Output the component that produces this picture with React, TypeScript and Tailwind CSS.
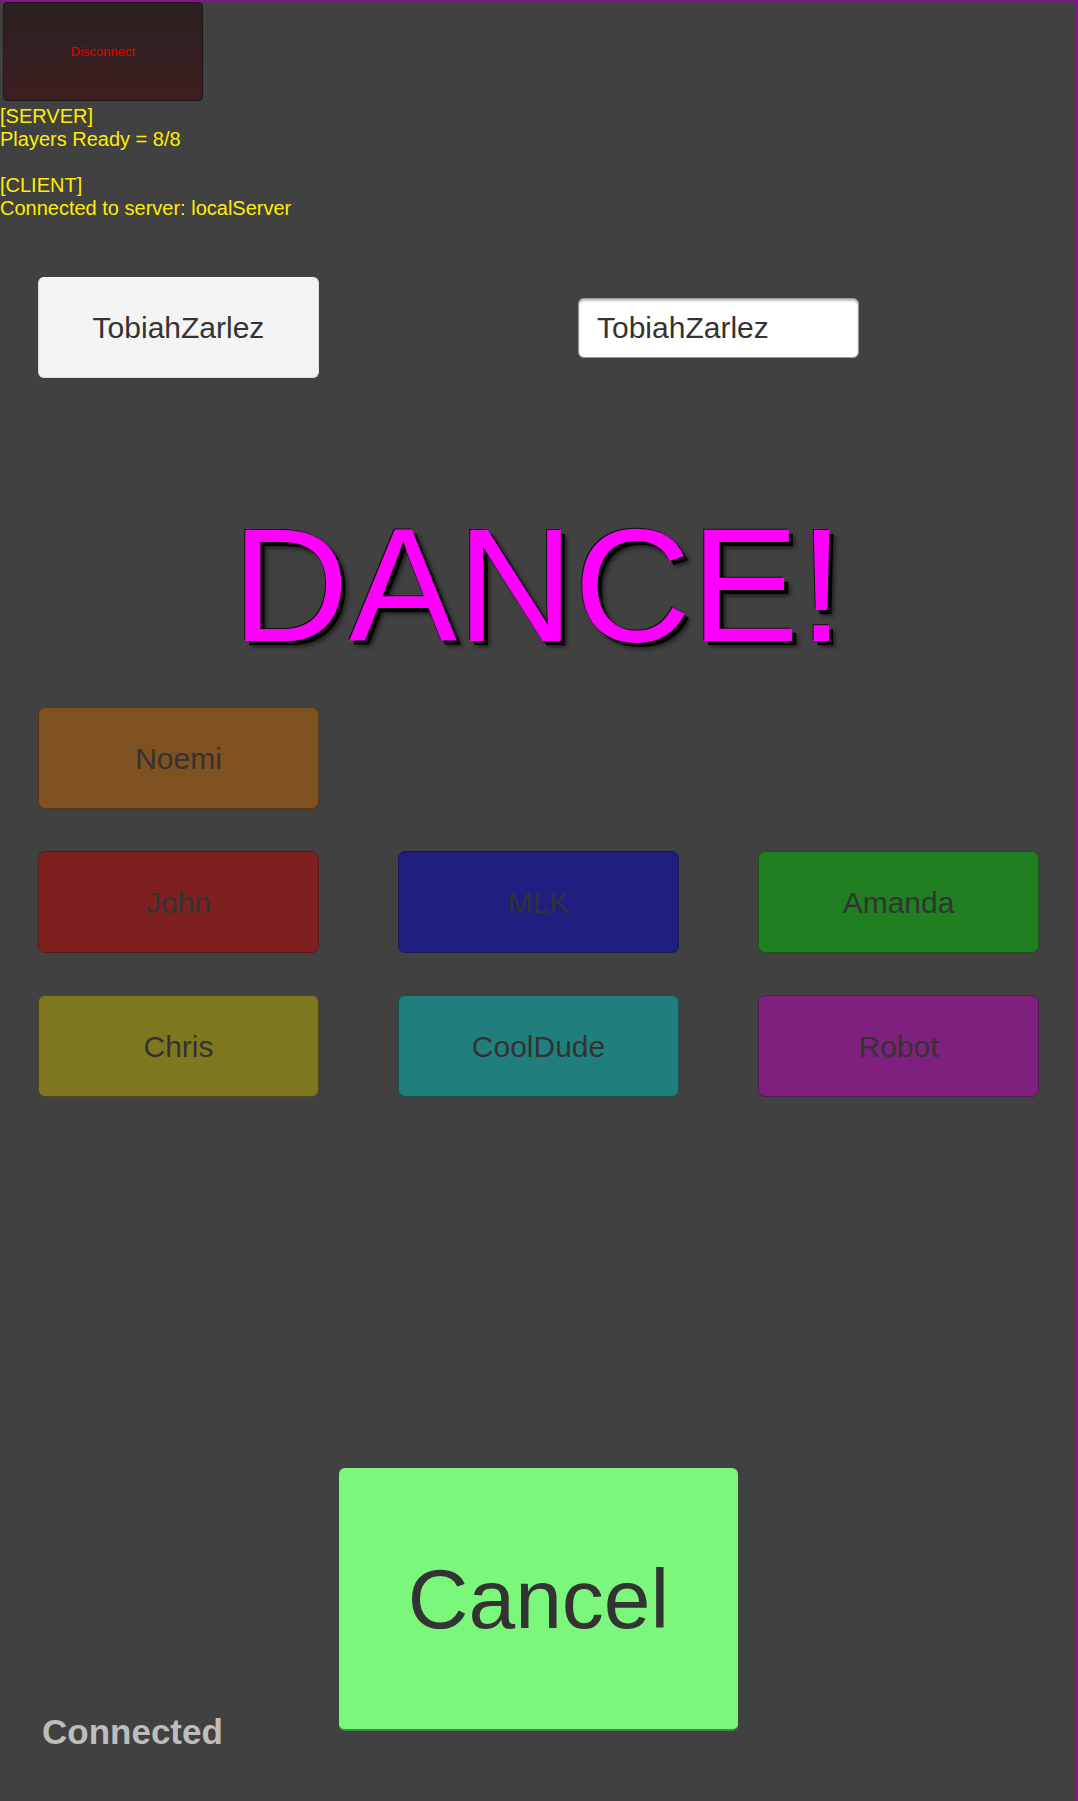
import React from 'react';

const PLAYERS = [
  { name: 'John', cls: 'bg-[#7f2020] border-[#5a1a1a]' },
  { name: 'MLK', cls: 'bg-[#201f7f] border-[#1a1a50]' },
  { name: 'Amanda', cls: 'bg-[#207f20] border-[#1a501a]' },
  { name: 'Chris', cls: 'bg-[#7f7720] border-[#504b1a]' },
  { name: 'CoolDude', cls: 'bg-[#207f7c] border-[#1a504e]' },
  { name: 'Robot', cls: 'bg-[#7f207f] border-[#501a50]' },
];

function PlayerButton({ name, cls }: { name: string; cls: string }) {
  return (
    <div className={`flex h-[102px] w-[281px] items-center justify-center rounded-[7px] border text-[30px] text-[#333333] ${cls}`}>
      {name}
    </div>
  );
}

export default function App() {
  return (
    <div
      className="flex h-[1801px] w-[1078px] flex-col overflow-hidden border-t-2 border-r-2 border-[#8c108c] bg-[#414141]"
      style={{ fontFamily: '"Liberation Sans", Arial, sans-serif' }}
    >
      {/* Disconnect */}
      <div className="ml-[3px] flex h-[99px] w-[200px] items-center justify-center rounded-[4px] border border-[#1c1818] bg-gradient-to-b from-[#2a2121] to-[#3d1e20] text-[13px] text-[#e00000]">
        Disconnect
      </div>

      {/* Status log */}
      <div className="mt-[4px] text-[20px] leading-[23px] text-[#ffee00]">
        <div>[SERVER]</div>
        <div>Players Ready = 8/8</div>
        <div className="h-[23px]" />
        <div>[CLIENT]</div>
        <div>Connected to server: localServer</div>
      </div>

      {/* Name row */}
      <div className="mt-[57px] flex items-center pl-[38px]">
        <div className="flex h-[101px] w-[281px] items-center justify-center rounded-[6px] border border-[#dcdcdc] border-t-white bg-[#f4f4f4] text-[30px] text-[#333333]">
          TobiahZarlez
        </div>
        <div className="ml-[259px] flex h-[60px] w-[281px] items-center rounded-[6px] border border-[#9a9a9a] bg-white pl-[18px] text-[30px] text-[#333333] shadow-[inset_0_2px_2px_rgba(0,0,0,0.25)]">
          TobiahZarlez
        </div>
      </div>

      {/* Title */}
      <div
        className="mt-[126px] text-center text-[162px] leading-[162px] text-[#ff00ff]"
        style={{ textShadow: '4px 4px 0 #000, -1px -1px 0 #111, 6px 6px 4px rgba(0,0,0,0.55)' }}
      >
        DANCE!
      </div>

      {/* Players */}
      <div className="mt-[41px] grid grid-cols-[281px_281px_281px] gap-x-[79px] gap-y-[42px] pl-[38px]">
        <PlayerButton name="Noemi" cls="bg-[#7f5020] border-[#553518]" />
        <div />
        <div />
        {PLAYERS.map((p) => (
          <PlayerButton key={p.name} name={p.name} cls={p.cls} />
        ))}
      </div>

      {/* Bottom */}
      <div className="mt-[371px] flex items-start">
        <div className="mt-[244px] w-[339px] pl-[42px] text-[35px] font-bold leading-[40px] text-[#bdbdbd]">
          Connected
        </div>
        <div className="flex h-[263px] w-[399px] items-center justify-center rounded-[6px] border-b-2 border-[#3c8f3c] bg-[#7bf77b] text-[84px] text-[#333333]">
          Cancel
        </div>
      </div>
    </div>
  );
}
